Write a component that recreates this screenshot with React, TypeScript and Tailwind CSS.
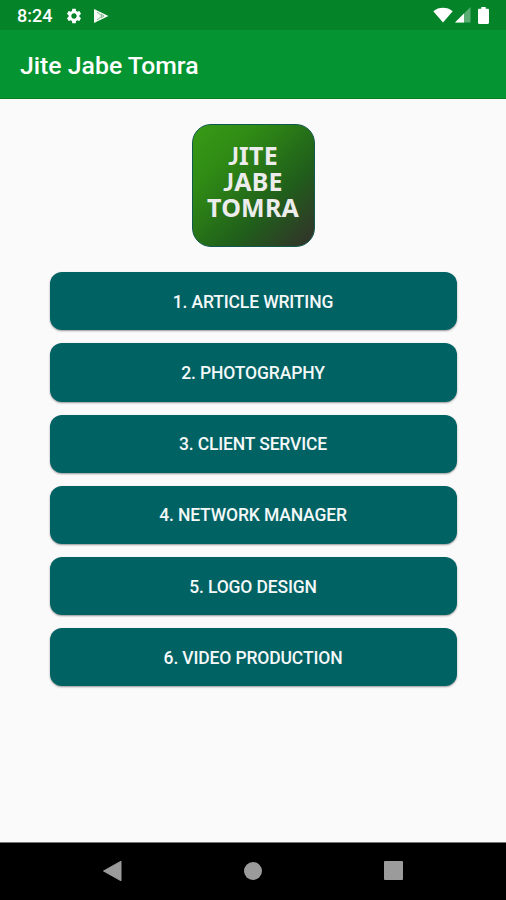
import { MdSettings } from "react-icons/md";

const services = [
  "Article Writing",
  "Photography",
  "Client Service",
  "Network Manager",
  "Logo Design",
  "Video Production",
];

function StatusBar() {
  return (
    <div className="h-[30px] bg-[#048329] flex items-center justify-between pl-[17px] pr-[17px] text-white">
      <div className="flex items-center h-full pt-[1px]">
        <span className="w-[48px] text-[18px] leading-none font-medium">8:24</span>
        <MdSettings className="size-[18px]" />
        <svg viewBox="0 0 16 16" className="ml-[10px] size-[16px]">
          <path d="M1 1v14L15.5 8z" fill="#f4faf4" />
          <path d="M4 4l5 4-5 4M8 6l3 2-3 2" fill="none" stroke="#7db58b" strokeWidth="1" />
        </svg>
      </div>
      <div className="flex items-center">
        <svg viewBox="0 0 20 16" className="w-[20px] h-[16px]">
          <path d="M0.3 4.2C5.8-.3 14.2-.3 19.7 4.2L10 15.5z" fill="#fff" />
        </svg>
        <svg viewBox="0 0 16 16" className="ml-[2px] size-[16px]">
          <path d="M0 15.5L15.5 0v15.5z" fill="#fff" fillOpacity="0.35" />
          <path d="M0 15.5L9 6.5v9z" fill="#fff" />
        </svg>
        <svg viewBox="0 0 11 17" className="ml-[7px] w-[11px] h-[17px]">
          <path d="M3.3 0h4.4v1.7h2.1c.7 0 1.2.5 1.2 1.2v12.9c0 .7-.5 1.2-1.2 1.2H1.2C.5 17 0 16.5 0 15.8V2.9c0-.7.5-1.2 1.2-1.2h2.1z" fill="#fff" />
        </svg>
      </div>
    </div>
  );
}

// Lato's J stays on the baseline, unlike the one in Noto Sans
function J() {
  return <span className="font-['Lato',sans-serif] leading-none">J</span>;
}

function Logo() {
  return (
    <div className="w-[123px] h-[123px] rounded-[19px] border border-[#12594d] bg-[linear-gradient(135deg,#389b16_0%,#2f8a15_28%,#205f1b_65%,#34302b_100%)] pt-[17px] text-center text-[#ececec] font-bold text-[25px] tracking-[0.2px] leading-[26px] font-['Noto_Sans',sans-serif]">
      <div className="h-[26px]"><J />ITE</div>
      <div className="h-[26px]"><J />ABE</div>
      <div className="h-[26px]">TOMRA</div>
    </div>
  );
}

function NavBar() {
  return (
    <nav className="h-[58px] bg-black border-t border-[#777] flex items-center justify-between pl-[103px] pr-[103px] pb-[2px]">
      <svg viewBox="0 0 19 22" className="w-[19px] h-[22px]">
        <path d="M0.5 11L18 1.2v19.6z" fill="#9b9b9b" stroke="#9b9b9b" strokeLinejoin="round" />
      </svg>
      <div className="size-[18px] rounded-full bg-[#9b9b9b]" />
      <div className="size-[19px] rounded-[1px] bg-[#9b9b9b]" />
    </nav>
  );
}

export default function App() {
  return (
    <div className="w-[506px] h-[900px] flex flex-col overflow-hidden bg-[#fafafa] font-['Roboto',sans-serif]">
      <StatusBar />
      <header className="h-[69px] bg-[#049532] border-b border-[#087f24] flex items-center px-5 pt-[4px]">
        <h1 className="text-[24.8px] leading-none font-medium text-white">Jite Jabe Tomra</h1>
      </header>

      <main className="flex-1 flex flex-col items-center pt-[25px]">
        <Logo />
        <div className="mt-[25.3px] flex flex-col gap-[13px]">
          {services.map((name, i) => (
            <button
              key={name}
              className="w-[407px] h-[58.2px] pt-[1px] rounded-[12px] bg-[#016264] text-[#f4f8f8] text-[17.5px] tracking-[-0.14px] font-medium uppercase shadow-[0_1px_2px_rgba(0,0,0,0.4)]"
            >
              {i + 1}. {name}
            </button>
          ))}
        </div>
      </main>

      <NavBar />
    </div>
  );
}
